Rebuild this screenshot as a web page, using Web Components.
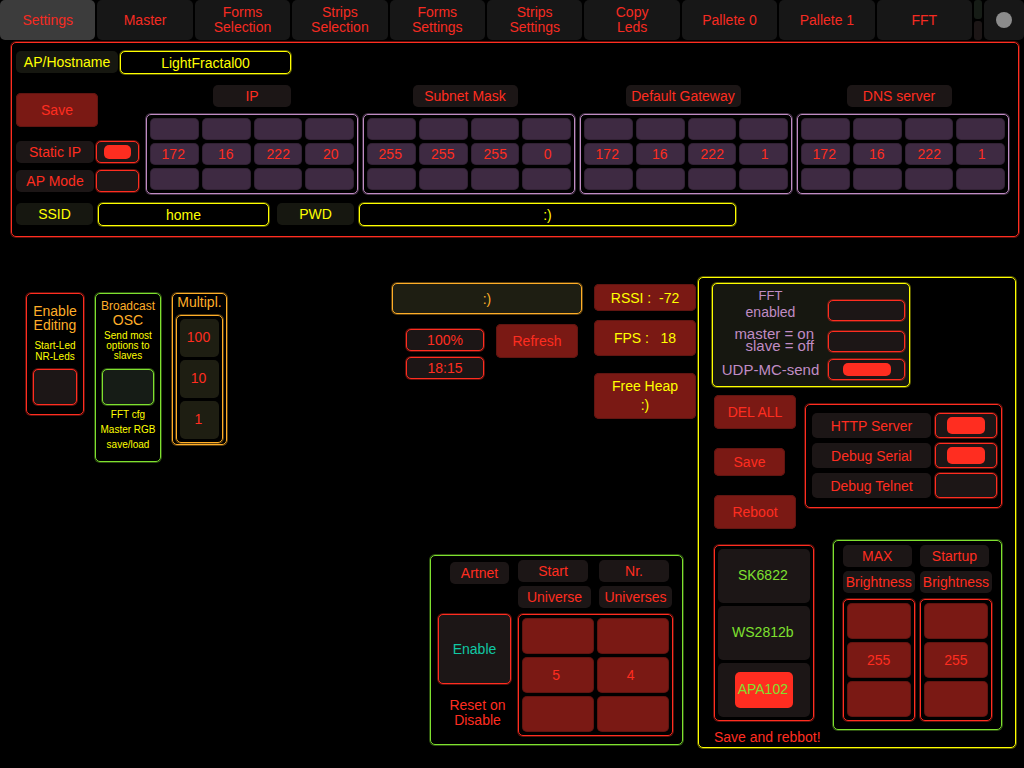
<!DOCTYPE html>
<html lang="en">
<head>
<meta charset="utf-8">
<title>LightFractal settings</title>
<style>
  html { background: #000; }
  body { margin: 0; background: #000; color: #ff2d20; font: 14px/16px "Liberation Sans", Arial, sans-serif; }
</style>
</head>
<body>
<light-console></light-console>

<script>
const BASE = `
  *, *::before { box-sizing: border-box; }
  :host { display: block; box-sizing: border-box; --red: #ff2d20; --yellow: #ffff00; --green: #7fe02f; --orange: #ffae28; --violet: #c08cc4;
    --radius: 5px; min-width: 0; }
  :host([tone=red]) { --line: #ff2d20; --fill: #1c1616; }
  :host([tone=yellow]) { --line: #ffff00; --fill: #161710; }
  :host([tone=green]) { --line: #7fe02f; --fill: #161c16; }
  :host([tone=orange]) { --line: #ffae28; --fill: #1e1e12; }
  :host([tone=violet]) { --line: #c08cc4; --fill: #3e2a42; }
  :host([tone=solid]) { --line: #ff2d20; --fill: #7a1914; }
  button, input { font: inherit; color: inherit; margin: 0; padding: 0; border: 0; border-radius: var(--radius); outline: none; }
  button { cursor: pointer; }
`;
const define = (name, css, html, setup) => customElements.define(name, class extends HTMLElement {
  constructor() {
    super();
    this.attachShadow({ mode: "open" });
  }
  connectedCallback() {
    const markup = typeof html === "function" ? html(this) : html;
    this.shadowRoot.innerHTML = `<style>${BASE}${css}</style>${markup}`;
    if (setup) setup(this.shadowRoot, this);
  }
});

/* outlined container */
define("osc-frame", `
  :host { border: 1px solid var(--line); border-radius: var(--radius); box-shadow: 0 0 0 1px color-mix(in srgb, var(--line) 35%, transparent); }
  :host([filled]) { background: var(--fill); }
`, `<slot></slot>`);

/* static caption on a dim plate */
define("osc-chip", `
  :host { height: var(--chip-height, 22px); display: flex; align-items: center; justify-content: center; white-space: nowrap;
    background: var(--fill); color: var(--line); border-radius: var(--radius); }
`, `<slot></slot>`);

define("osc-push", `
  button { width: 100%; height: 100%; display: block; background: #7a1914; color: inherit; white-space: pre; line-height: inherit;
    box-shadow: inset 0 0 0 1px #611511; }
`, `<button type="button"><slot></slot></button>`);

define("osc-tabs", `
  :host { display: grid; grid-template-columns: repeat(10, 1fr) 8px 40px; gap: 2px; height: 40px; line-height: 15px; }
`, `<slot></slot>`);
define("osc-tab", `
  button { width: 100%; height: 100%; display: flex; align-items: center; justify-content: center; background: #171717; color: #f52b22;
    line-height: inherit; text-align: center; }
  :host([active]) button { background: #3c3c3c; }
`, el => `<button type="button" aria-label="${el.getAttribute("name") || el.textContent}"><slot></slot></button>`);
define("osc-leds", `
  :host { display: grid; grid-template-rows: 1fr 1fr; gap: 2px; }
  i { border-radius: 3px; background: #161c16; }
  i + i { background: #1c1616; }
`, `<i></i><i></i>`);
define("osc-dot", `
  :host { width: 16px; height: 16px; border-radius: 50%; background: #8c8c8c; }
`, ``);

/* check box, with its caption beside, above or over it */
define("osc-toggle", `
  label { display: grid; grid-template-columns: var(--cols, 1fr 43px); gap: var(--toggle-gap, 2px); height: 100%; align-items: var(--toggle-align, center); }
  span { display: block; text-align: center; color: var(--caption, var(--line)); white-space: nowrap; }
  :host([plate]) span { display: grid; place-items: center; height: 100%; background: var(--fill); border-radius: var(--radius); }
  input { appearance: none; display: grid; place-items: center; width: 100%; height: var(--box-height, 100%); background: var(--fill);
    border: 1px solid var(--line); box-shadow: 0 0 0 1px color-mix(in srgb, var(--line) 35%, transparent); }
  input:checked::before { content: ""; width: 64%; height: 72%; border-radius: var(--radius); background: var(--line); }
  :host([over]) label { display: grid; grid-template: 100% / 100%; }
  :host([over]) span, :host([over]) input { grid-area: 1 / 1; }
  :host([over]) span { z-index: 1; }
`, el => `<label><span><slot></slot></span><input type="checkbox"${el.hasAttribute("checked") ? " checked" : ""}${
   el.hasAttribute("name") ? ` aria-label="${el.getAttribute("name")}"` : ""}></label>`);
define("osc-switch", `
  input { appearance: none; display: block; width: 100%; height: 36px; background: var(--fill); border: 1px solid var(--line);
    box-shadow: 0 0 0 1px color-mix(in srgb, var(--line) 35%, transparent); }
`, el => `<input type="checkbox" aria-label="${el.getAttribute("name")}">`);

/* caption plate and text box */
define("osc-field", `
  :host { display: grid; grid-template-columns: var(--chip, 77px) 1fr; gap: var(--field-gap, 5px); color: var(--yellow); }
  label { display: grid; place-items: center; height: 22px; background: var(--fill); border-radius: var(--radius); }
  input { width: 100%; min-width: 0; height: 23px; text-align: center; background: #000; border: 1px solid var(--line);
    box-shadow: 0 0 0 1px color-mix(in srgb, var(--line) 35%, transparent); }
`, el => `<label for="f">${el.getAttribute("label")}</label><input id="f" type="text" value="${el.getAttribute("value")}">`);

/* read-out with an outline */
define("osc-readout", `
  output { display: grid; place-items: center; height: 100%; background: var(--fill); color: var(--line); border: 1px solid var(--line);
    border-radius: var(--radius); box-shadow: 0 0 0 1px color-mix(in srgb, var(--line) 35%, transparent); }
`, `<output><slot></slot></output>`);

/* three rows of push cells; the values lie over the middle row */
define("osc-pad", `
  :host { position: relative; border: 1px solid var(--line); border-radius: var(--radius); padding: 3px;
    box-shadow: 0 0 0 1px color-mix(in srgb, var(--line) 35%, transparent); }
  .cells { display: grid; grid-template-columns: repeat(var(--n), 1fr); grid-auto-rows: var(--cell, 22px); gap: 3px; }
  .cells button { background: var(--fill); box-shadow: inset 0 0 0 1px rgba(0, 0, 0, .2); }
  .values { position: absolute; inset: 0; padding: var(--value-pad, 0); display: grid; grid-template-columns: repeat(var(--n), 1fr); align-items: center;
    text-align: center; color: #ff2d20; pointer-events: none; }
`, el => {
  const values = el.getAttribute("values").split(" ");
  const steps = ["up", "value", "down"];
  return `<style>:host { --n: ${values.length}; }</style>
    <div class="cells">${steps.map(s => values.map((v, i) => `<button type="button" aria-label="${s} ${i + 1}"></button>`).join("")).join("")}</div>
    <div class="values">${values.map(v => `<output>${v}</output>`).join("")}</div>`;
});

/* vertical choice list */
define("osc-choice", `
  :host { border: 1px solid var(--line); border-radius: var(--radius); padding: 3px; display: grid; gap: 3px;
    box-shadow: 0 0 0 1px color-mix(in srgb, var(--line) 35%, transparent); }
  label { display: grid; grid-template: var(--cell) / 100%; align-items: center; text-align: center; color: var(--text); }
  span, input { grid-area: 1 / 1; }
  span { z-index: 1; padding: 0 2px 2px 0; }
  input { appearance: none; width: 100%; height: 100%; background: var(--fill); display: grid; place-items: center; }
  input:checked::before { content: ""; width: 63%; height: 67%; border-radius: var(--radius); background: #ff2d20; }
`, el => el.getAttribute("options").split(" ").map(o =>
  `<label><span>${o}</span><input type="radio" name="c"${o === el.getAttribute("value") ? " checked" : ""}></label>`).join(""));

/* network settings */
define("network-panel", `
  osc-frame { padding: 8px 9px 10px 4px; }
  .host { display: grid; grid-template-columns: 275fr 718fr; --chip: 102px; --field-gap: 2px; }
  .address { display: grid; grid-template-columns: 125px repeat(4, 1fr); gap: 5px; margin: 11px 0 9px; }
  .mode { padding: 8px 2px 0 0; display: grid; gap: 7px; grid-template-rows: 41px 22px 22px; }
  .mode osc-push { width: 82px; height: 34px; }
  .group { display: grid; justify-items: center; align-content: start; gap: 7px; }
  .group osc-pad { width: 100%; }
  .group osc-chip { width: 78px; }
  .group.wide osc-chip { width: 105px; margin-right: 8px; }
  .group.widest osc-chip { width: 115px; margin-right: 6px; }
  .wifi { display: grid; grid-template-columns: 253fr 459fr 265fr; gap: 8px; }
`, `
  <osc-frame tone="red">
    <div class="host"><osc-field tone="yellow" label="AP/Hostname" value="LightFractal00"></osc-field></div>
    <div class="address">
      <div class="mode">
        <osc-push>Save</osc-push>
        <osc-toggle tone="red" plate checked>Static IP</osc-toggle>
        <osc-toggle tone="red" plate>AP Mode</osc-toggle>
      </div>
      <div class="group"><osc-chip tone="red">IP</osc-chip><osc-pad tone="violet" values="172 16 222 20"></osc-pad></div>
      <div class="group wide"><osc-chip tone="red">Subnet Mask</osc-chip><osc-pad tone="violet" values="255 255 255 0"></osc-pad></div>
      <div class="group widest"><osc-chip tone="red">Default Gateway</osc-chip><osc-pad tone="violet" values="172 16 222 1"></osc-pad></div>
      <div class="group wide"><osc-chip tone="red">DNS server</osc-chip><osc-pad tone="violet" values="172 16 222 1"></osc-pad></div>
    </div>
    <div class="wifi">
      <osc-field tone="yellow" label="SSID" value="home"></osc-field>
      <osc-field tone="yellow" label="PWD" value=":)"></osc-field>
    </div>
  </osc-frame>`);

/* editing, broadcast and multiplier strips */
define("edit-strips", `
  :host { display: flex; align-items: flex-start; gap: 11px; padding-top: 16px; text-align: center; color: var(--orange); line-height: 14px; }
  p { margin: 0; white-space: nowrap; }
  .note { font-size: 10px; line-height: 11px; color: var(--yellow); }
  .edit { width: 58px; padding: 10px 6px 9px; }
  .edit .note { margin: 8px 0 7px; }
  .cast { width: 66px; padding: 6px 6px 9px; }
  .cast p { margin-inline: -6px; }
  .cast osc-switch { margin: 8px 0 2px; }
  .cast .small { font-size: 12px; line-height: 13px; }
  .cast .dense { line-height: 10px; margin-top: 4px; }
  .cast .loose { line-height: 15px; }
  .mult { width: 55px; padding: 1px 3px; }
  .mult osc-choice { margin-top: 6px; --cell: 38px; --text: var(--red); }
`, `
  <osc-frame class="edit" tone="red">
    <p>Enable<br>Editing</p>
    <p class="note">Start-Led<br>NR-Leds</p>
    <osc-switch tone="red" name="Enable Editing"></osc-switch>
  </osc-frame>
  <osc-frame class="cast" tone="green">
    <p class="small">Broadcast</p>
    <p>OSC</p>
    <p class="note dense">Send most<br>options to<br>slaves</p>
    <osc-switch tone="green" name="Broadcast OSC"></osc-switch>
    <p class="note loose">FFT cfg<br>Master RGB<br>save/load</p>
  </osc-frame>
  <osc-frame class="mult" tone="orange">
    <p>Multipl.</p>
    <osc-choice tone="orange" options="100 10 1"></osc-choice>
  </osc-frame>`);

/* live status read-outs */
define("status-board", `
  :host { display: grid; grid-template-columns: 190fr 102fr; gap: 12px; }
  .info { height: 31px; }
  .live { display: grid; grid-template-columns: 78fr 82fr; gap: 12px; align-items: start; padding: 0 4px 0 14px; margin-top: 10px; }
  .stack { display: grid; gap: 6px; grid-auto-rows: 22px; padding-top: 5px; }
  .live osc-push { height: 34px; }
  .meters { display: grid; grid-template-rows: 27px 36px 46px; row-gap: 9px; align-content: start; color: var(--yellow); padding-top: 1px; }
  .meters osc-push:last-child { line-height: 19px; height: 46px; margin-top: 8px; }
`, `
  <div>
    <osc-readout class="info" tone="orange">:)</osc-readout>
    <div class="live">
      <div class="stack"><osc-readout tone="red">100%</osc-readout><osc-readout tone="red">18:15</osc-readout></div>
      <osc-push>Refresh</osc-push>
    </div>
  </div>
  <div class="meters">
    <osc-push>RSSI :  -72</osc-push>
    <osc-push>FPS :   18</osc-push>
    <osc-push>Free Heap<br>:)</osc-push>
  </div>`);

/* two stacked caption plates at the head of a column */
define("osc-heading", `
  :host { display: grid; gap: 4px; }
  osc-chip:first-of-type { margin-right: 3px; }
`, el => el.getAttribute("lines").split(" ").map(t => `<osc-chip tone="red">${t}</osc-chip>`).join(""));

define("artnet-panel", `
  osc-frame { display: grid; grid-template-columns: 73fr 155fr; column-gap: 7px; row-gap: 6px; padding: 4px 9px 8px 7px; }
  .name { padding: 2px 2px 0 12px; }
  .heads { display: grid; grid-template-columns: 1fr 1fr; gap: 8px; padding-right: 1px; }
  .enable { height: 70px; --caption: #10c8a4; }
  .left p { margin: 14px 0 0; padding-left: 6px; text-align: center; line-height: 15px; }
  osc-pad { --cell: 36px; --value-pad: 0 4px 0 0; }
`, `
  <osc-frame tone="green">
    <div class="name"><osc-chip tone="red">Artnet</osc-chip></div>
    <div class="heads"><osc-heading lines="Start Universe"></osc-heading><osc-heading lines="Nr. Universes"></osc-heading></div>
    <div class="left">
      <osc-toggle class="enable" tone="red" over>Enable</osc-toggle>
      <p>Reset on<br>Disable</p>
    </div>
    <osc-pad tone="solid" values="5 4"></osc-pad>
  </osc-frame>`);

define("fft-panel", `
  osc-frame { width: 198px; padding: 3px 4px 6px 0; display: grid; gap: 7px; --caption: #c08cc4; --cols: 1fr 77px; --toggle-gap: 0px;
    --toggle-align: end; --box-height: 21px; }
  .two { line-height: 17px; }
  .tight { line-height: 12px; font-size: 15px; }
  .one { line-height: 20px; font-size: 15px; }
  .right { display: block; text-align: right; padding-right: 14px; }
  small { font-size: 13px; }
`, `
  <osc-frame tone="yellow" filled>
    <osc-toggle class="two" tone="red"><small>FFT</small><br>enabled</osc-toggle>
    <osc-toggle class="tight" tone="red"><div class="right">master = on<br>slave = off</div></osc-toggle>
    <osc-toggle class="one" tone="red" checked>UDP-MC-send</osc-toggle>
  </osc-frame>`);

define("device-panel", `
  osc-frame.outer { padding: 5px 13px 2px; }
  .services { display: grid; grid-template-columns: 82px 1fr; gap: 9px; padding: 8px 0 0 2px; align-items: start; }
  .actions { display: grid; gap: 19px; grid-template-rows: 34px 28px 34px; }
  .actions .short { width: 71px; }
  .servers { margin-top: 9px; padding: 8px 4px 9px 6px; display: grid; gap: 5px; grid-auto-rows: 25px; --cols: 1fr 62px; --toggle-gap: 4px; }
  .leds { display: grid; grid-template-columns: minmax(0, 100fr) minmax(0, 170fr); gap: 19px; padding: 11px 0 0 2px; align-items: start; }
  .type { padding-top: 5px; }
  .type osc-choice { --cell: 54px; --text: var(--green); }
  .type p { margin: 8px 0 0; white-space: nowrap; }
  .bright { display: grid; grid-template-columns: 1fr 1fr; gap: 6px 5px; padding: 4px 9px 8px; }
  .bright osc-pad { --cell: 36px; }
`, `
  <osc-frame class="outer" tone="yellow">
    <fft-panel></fft-panel>
    <div class="services">
      <div class="actions"><osc-push>DEL ALL</osc-push><osc-push class="short">Save</osc-push><osc-push>Reboot</osc-push></div>
      <osc-frame class="servers" tone="red">
        <osc-toggle tone="red" plate checked>HTTP Server</osc-toggle>
        <osc-toggle tone="red" plate checked>Debug Serial</osc-toggle>
        <osc-toggle tone="red" plate>Debug Telnet</osc-toggle>
      </osc-frame>
    </div>
    <div class="leds">
      <div class="type">
        <osc-choice tone="red" options="SK6822 WS2812b APA102" value="APA102"></osc-choice>
        <p>Save and rebbot!</p>
      </div>
      <osc-frame class="bright" tone="green">
        <osc-heading lines="MAX Brightness"></osc-heading><osc-heading lines="Startup Brightness"></osc-heading>
        <osc-pad tone="solid" values="255"></osc-pad><osc-pad tone="solid" values="255"></osc-pad>
      </osc-frame>
    </div>
  </osc-frame>`);

define("light-console", `
  network-panel { margin: 2px 5px 0 11px; }
  main { display: grid; grid-template-columns: 364fr 304fr 318fr; gap: 2px; padding: 0 8px 20px 26px; margin-top: 40px; }
  .middle { display: flex; flex-direction: column; padding: 6px 0 3px; }
  artnet-panel { margin: auto 13px 0 38px; }
`, `
  <osc-tabs>
    <osc-tab active>Settings</osc-tab>
    <osc-tab>Master</osc-tab>
    <osc-tab name="Forms Selection">Forms<br>Selection</osc-tab>
    <osc-tab name="Strips Selection">Strips<br>Selection</osc-tab>
    <osc-tab name="Forms Settings">Forms<br>Settings</osc-tab>
    <osc-tab name="Strips Settings">Strips<br>Settings</osc-tab>
    <osc-tab name="Copy Leds">Copy<br>Leds</osc-tab>
    <osc-tab>Pallete 0</osc-tab>
    <osc-tab>Pallete 1</osc-tab>
    <osc-tab>FFT</osc-tab>
    <osc-leds></osc-leds>
    <osc-tab name="Menu"><osc-dot></osc-dot></osc-tab>
  </osc-tabs>
  <network-panel></network-panel>
  <main>
    <edit-strips></edit-strips>
    <div class="middle">
      <status-board></status-board>
      <artnet-panel></artnet-panel>
    </div>
    <device-panel></device-panel>
  </main>`);
</script>
</body>
</html>
